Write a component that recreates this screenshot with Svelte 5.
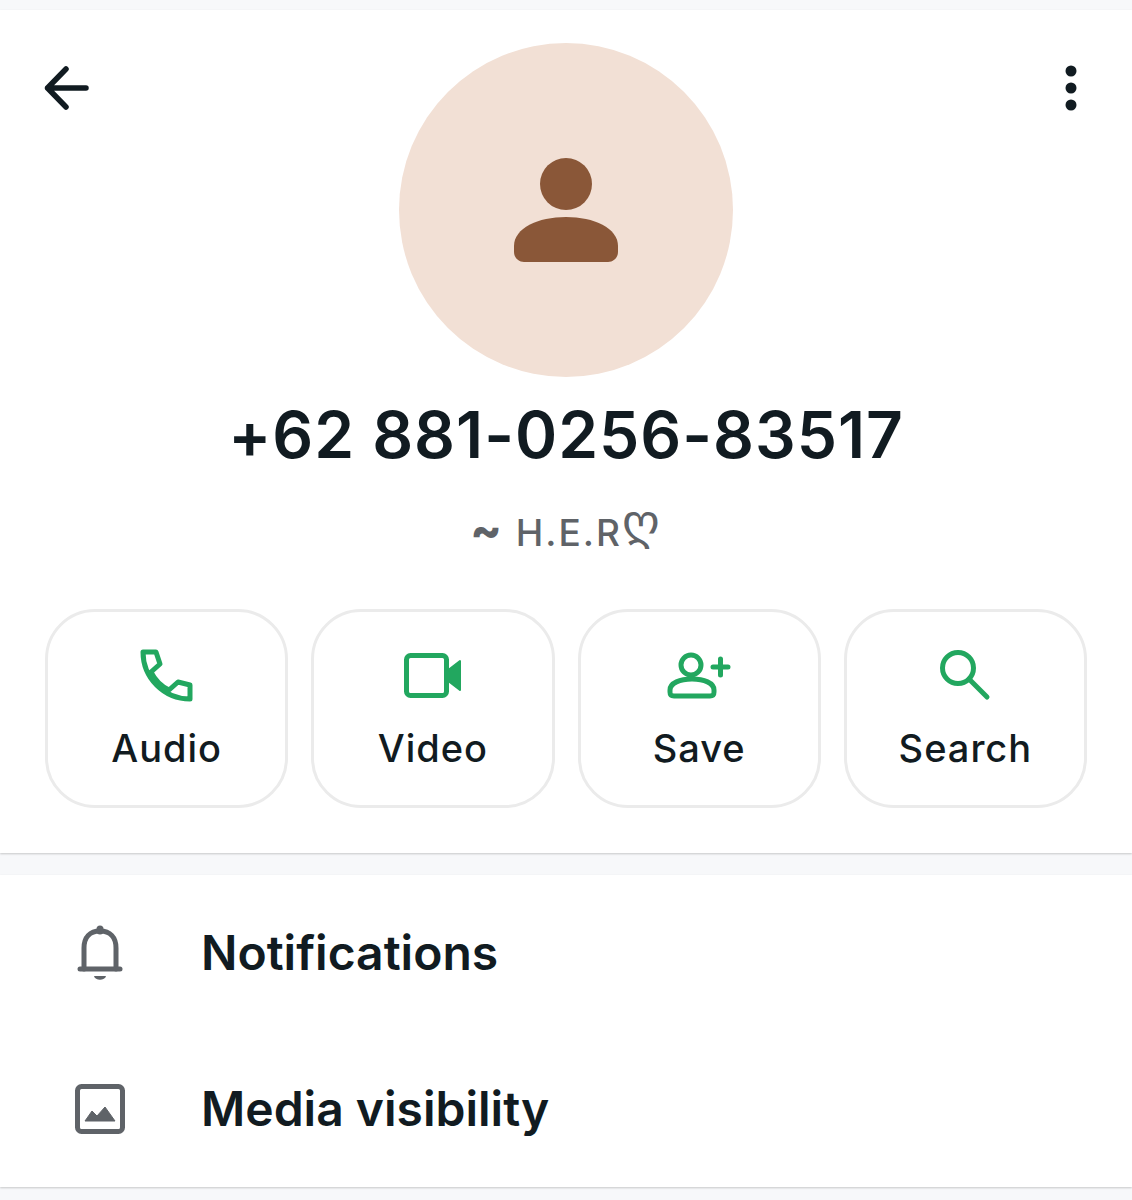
<script>
  const actions = [
    { label: 'Audio', icon: 'phone' },
    { label: 'Video', icon: 'video' },
    { label: 'Save', icon: 'save' },
    { label: 'Search', icon: 'search' }
  ];
</script>

<div class="page">
  <section class="profile">
    <button class="top back" aria-label="Back">
      <svg width="48" height="48" viewBox="0 0 48 48">
        <path d="M43 24H4.500M23 5 4.500 24 23 43" fill="none" stroke="#111b21" stroke-width="5.500" stroke-linecap="round" stroke-linejoin="round" />
      </svg>
    </button>
    <button class="top more" aria-label="More">
      <svg width="14" height="50" viewBox="0 0 14 50">
        <circle cx="7" cy="8" r="5.500" />
        <circle cx="7" cy="25" r="5.500" />
        <circle cx="7" cy="42" r="5.500" />
      </svg>
    </button>

    <div class="avatar">
      <svg width="104" height="104" viewBox="0 0 104 104">
        <circle cx="52" cy="26" r="26" fill="#8a5738" />
        <path d="M0 88C0 70 24 59 52 59s52 11 52 29v6c0 6-5 10-10 10H10C5 104 0 100 0 94z" fill="#8a5738" />
      </svg>
    </div>

    <h1>+62 881-0256-83517</h1>
    <p class="about"><span class="tilde">~</span> H.E.R<span class="heart">ღ</span></p>

    <div class="actions">
      {#each actions as action}
        <button class="action">
          <span class="icon">
            {#if action.icon === 'phone'}
              <svg width="56" height="56" viewBox="0 0 56 56" fill="none" stroke="#22a75f" stroke-width="5" stroke-linejoin="round" stroke-linecap="round">
                <path d="M4 5H17L21 17 12 25C16 33 22 39 30 43L39 35 51 38V52C25 52 4 31 4 5Z" />
              </svg>
            {:else if action.icon === 'video'}
              <svg width="60" height="48" viewBox="0 0 60 48">
                <rect x="3.500" y="4.500" width="40" height="40" rx="4" fill="none" stroke="#22a75f" stroke-width="5" />
                <path d="M44 20 57 10V39L44 29Z" fill="#22a75f" stroke="#22a75f" stroke-width="2" stroke-linejoin="round" />
              </svg>
            {:else if action.icon === 'save'}
              <svg width="64" height="48" viewBox="0 0 64 48" fill="none" stroke="#22a75f" stroke-width="5" stroke-linecap="round" stroke-linejoin="round">
                <circle cx="24" cy="14" r="10" />
                <path d="M3 39C3 32 13 28 25 28S47 32 47 39V41C47 44 46 45 43 45H7C4 45 3 44 3 41Z" />
                <path d="M46 16H61M53.500 8V24" />
              </svg>
            {:else}
              <svg width="52" height="52" viewBox="0 0 52 52" fill="none" stroke="#22a75f" stroke-width="5" stroke-linecap="round">
                <circle cx="19" cy="19" r="15.500" />
                <path d="M30 30 48 48" />
              </svg>
            {/if}
          </span>
          <span class="label">{action.label}</span>
        </button>
      {/each}
    </div>
  </section>

  <section class="list">
    <div class="row">
      <span class="row-icon">
        <svg width="52" height="60" viewBox="0 0 52 60" fill="none" stroke="#5f6368" stroke-width="5" stroke-linecap="round">
          <path d="M10 46V25C10 14 16 8 26 8S42 14 42 25V46" />
          <path d="M6 46H46" />
          <path d="M26 6V8" stroke-width="7" />
          <path d="M20 53H32C31 58 21 58 20 53Z" fill="#5f6368" stroke="none" />
        </svg>
      </span>
      <span class="row-label">Notifications</span>
    </div>
    <div class="row">
      <span class="row-icon">
        <svg width="52" height="52" viewBox="0 0 52 52">
          <rect x="3.500" y="3.500" width="45" height="45" rx="4" fill="none" stroke="#5f6368" stroke-width="5" />
          <path d="M11 38 18 28 23 33 31 24 41 38Z" fill="#5f6368" stroke="#5f6368" stroke-linejoin="round" />
        </svg>
      </span>
      <span class="row-label">Media visibility</span>
    </div>
  </section>
</div>

<style>
  :global(body) {
    background: #f7f8fa;
  }

  .page {
    padding: 10px 0 13px;
    font-family: Inter, "Noto Sans", sans-serif;
    color: #111b21;
  }

  button {
    border: none;
    background: none;
    padding: 0;
    font: inherit;
    color: inherit;
  }

  .profile {
    position: relative;
    background: #fff;
    padding: 33px 45px 45px;
    box-shadow: 0 1px 2px rgba(0, 0, 0, 0.2);
  }

  .top {
    position: absolute;
    display: flex;
  }

  .back {
    left: 43px;
    top: 54px;
  }

  .more {
    left: 1064px;
    top: 53px;
    fill: #111b21;
  }

  .avatar {
    width: 334px;
    height: 334px;
    margin: 0 auto;
    border-radius: 50%;
    background: #f2e0d5;
    display: flex;
    align-items: center;
    justify-content: center;
  }

  h1 {
    margin: 20px 0 0;
    font-size: 64px;
    line-height: 76px;
    font-weight: 600;
    letter-spacing: 1px;
    text-align: center;
  }

  .about {
    margin: 37px 0 0;
    font-size: 37px;
    line-height: 46px;
    font-weight: 500;
    letter-spacing: 2px;
    text-align: center;
    color: #5f6368;
  }

  .tilde {
    font-size: 46px;
    font-weight: 800;
    line-height: 0;
  }

  .heart {
    font-family: "Noto Sans", "DejaVu Sans", sans-serif;
    font-size: 48px;
    line-height: 0;
    vertical-align: 8px;
  }

  .actions {
    display: grid;
    grid-template-columns: repeat(4, 1fr);
    gap: 23px;
    margin-top: 53px;
  }

  .action {
    height: 199px;
    border: 3px solid #ebebeb;
    border-radius: 50px;
    display: flex;
    flex-direction: column;
    align-items: center;
    padding-top: 35px;
  }

  .icon {
    height: 56px;
    display: flex;
    align-items: center;
  }

  .label {
    margin-top: 21px;
    font-size: 38px;
    line-height: 48px;
    font-weight: 500;
    letter-spacing: 1px;
  }

  .list {
    margin-top: 22px;
    background: #fff;
    box-shadow: 0 1px 2px rgba(0, 0, 0, 0.2);
  }

  .row {
    height: 156px;
    display: flex;
    align-items: center;
    padding-left: 74px;
  }

  .row-icon {
    width: 127px;
    display: flex;
  }

  .row-label {
    font-size: 48px;
    font-weight: 600;
    padding-bottom: 2px;
  }
</style>
